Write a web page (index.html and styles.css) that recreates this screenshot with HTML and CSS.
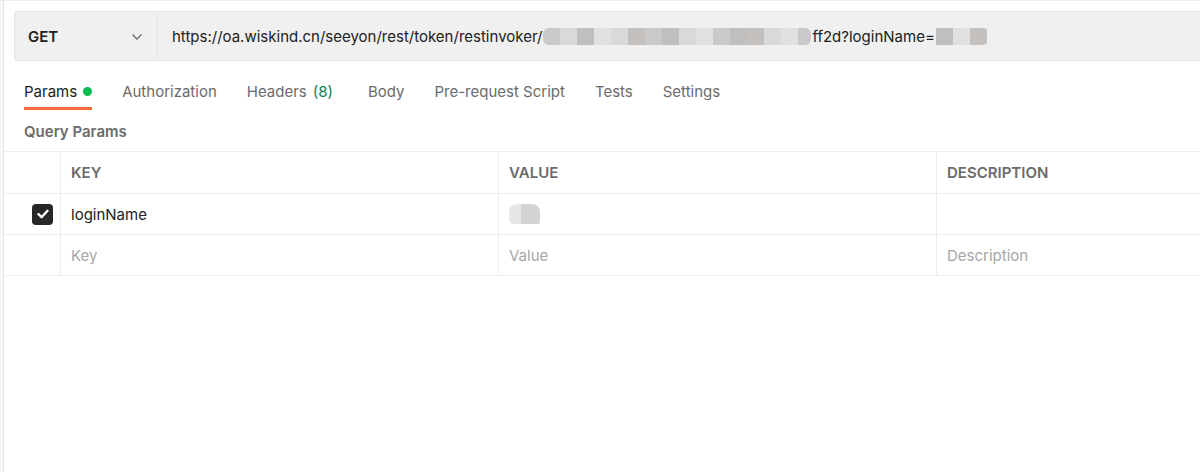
FILE: index.html
```html
<!DOCTYPE html>
<html>
<head>
<meta charset="utf-8">
<link rel="stylesheet" href="styles.css">
</head>
<body>
<div class="app">
  <div class="side"></div>
  <div class="main">
    <div class="urlbar">
      <div class="method">
        <span class="method-name">GET</span>
        <svg class="chev" width="12" height="8" viewBox="0 0 12 8"><path d="M1.5 1.5 L6 6 L10.5 1.5" fill="none" stroke="#6b6b6b" stroke-width="1.4"/></svg>
      </div>
      <div class="url">
        <span>https://oa.wiskind.cn/seeyon/rest/token/restinvoker/</span><span class="mosaic m1"><i class="c1"></i><i class="c2"></i><i class="c3"></i><i class="c4"></i><i class="c2"></i><i class="c5"></i><i class="c1"></i><i class="c3"></i><i class="c2"></i><i class="c4"></i><i class="c1"></i><i class="c3"></i><i class="c5"></i><i class="c2"></i><i class="c4"></i><i class="c1"></i></span><span>ff2d?loginName=</span><span class="mosaic m2"><i class="c3"></i><i class="c4"></i><i class="c5"></i></span>
      </div>
    </div>
    <div class="tabs">
      <div class="tab active">Params <span class="dot"></span></div>
      <div class="tab">Authorization</div>
      <div class="tab headers">Headers <span class="count">(8)</span></div>
      <div class="tab">Body</div>
      <div class="tab">Pre-request Script</div>
      <div class="tab">Tests</div>
      <div class="tab">Settings</div>
    </div>
    <div class="section-title">Query Params</div>
    <div class="table">
      <div class="row head">
        <div class="cell chk"></div>
        <div class="cell">KEY</div>
        <div class="cell">VALUE</div>
        <div class="cell">DESCRIPTION</div>
      </div>
      <div class="row">
        <div class="cell chk">
          <span class="checkbox"><svg width="12" height="10" viewBox="0 0 12 10"><path d="M1.5 5.2 L4.6 8.2 L10.5 1.8" fill="none" stroke="#fff" stroke-width="2.4" stroke-linecap="round" stroke-linejoin="round"/></svg></span>
        </div>
        <div class="cell text">loginName</div>
        <div class="cell"><span class="blurval"><i class="b1"></i><i class="b2"></i></span></div>
        <div class="cell"></div>
      </div>
      <div class="row">
        <div class="cell chk"></div>
        <div class="cell ph">Key</div>
        <div class="cell ph">Value</div>
        <div class="cell ph">Description</div>
      </div>
    </div>
  </div>
</div>
</body>
</html>
```

FILE: styles.css
```css
html, body {
  margin: 0;
  padding: 0;
  background: #fff;
  height: 100%;
}
body {
  font-family: Inter, "Noto Sans", sans-serif;
  font-size: 15px;
  color: #212121;
}
.app {
  display: flex;
  height: 472px;
  border-top: 1px solid #ededed;
  box-sizing: border-box;
  overflow: hidden;
}
.side {
  width: 3px;
  background: #f7f7f7;
  border-right: 1px solid #e6e6e6;
  flex: none;
}
.main {
  flex: 1;
  min-width: 0;
}
.urlbar {
  margin: 10px 0 0 10px;
  height: 48px;
  display: flex;
  background: #f0f0f0;
  border: 1px solid #e3e3e3;
  border-right: none;
  border-radius: 4px 0 0 4px;
}
.method {
  width: 143px;
  flex: none;
  display: flex;
  align-items: center;
  justify-content: space-between;
  padding: 0 14px 0 13px;
  box-sizing: border-box;
  border-right: 1px solid #e3e3e3;
}
.method-name {
  font-weight: 600;
  font-size: 15px;
  color: #212121;
}
.chev { margin-top: 1px; }
.url {
  display: flex;
  align-items: center;
  padding-left: 14px;
  font-size: 15px;
  color: #212121;
  white-space: nowrap;
}
.mosaic {
  display: inline-flex;
  height: 17px;
  margin: 0 1px;
}
.mosaic i {
  display: block;
  height: 17px;
  width: 17px;
  flex: none;
}
.m1 { width: 268px; overflow: hidden; border-radius: 6px; }
.m2 { width: 54px; overflow: hidden; border-radius: 0 8px 8px 0; }
.c1 { background: #c9c9c9; }
.c2 { background: #d9d9d9; }
.c3 { background: #bfbfbf; }
.c4 { background: #e0e0e0; }
.c5 { background: #c4c0bd; }
.tabs {
  display: flex;
  gap: 30px;
  margin: 11px 0 0 20px;
  height: 38px;
}
.tab {
  padding-top: 10px;
  color: #6b6b6b;
  box-sizing: border-box;
  height: 38px;
  display: flex;
  align-items: flex-start;
  gap: 6px;
  white-space: nowrap;
}
.tab.active {
  color: #212121;
  border-bottom: 3px solid #f26b3a;
}
.tab.headers { padding-right: 5px; }
.dot {
  width: 9px;
  height: 9px;
  border-radius: 50%;
  background: #0cbb52;
  margin-top: 5px;
}
.count { color: #0a7d52; }
.section-title {
  margin: 11px 0 0 20px;
  font-weight: 600;
  color: #6b6b6b;
  height: 21px;
  line-height: 21px;
}
.table {
  margin-top: 9px;
  border-top: 1px solid #ededed;
}
.row {
  display: grid;
  grid-template-columns: 56px 438px 438px 1fr;
  height: 40px;
  border-bottom: 1px solid #ededed;
}
.row.head { height: 41px; }
.cell {
  border-left: 1px solid #ededed;
  padding-left: 10px;
  display: flex;
  align-items: center;
  white-space: nowrap;
}
.cell.chk {
  border-left: none;
  justify-content: flex-end;
  padding-right: 7px;
  padding-left: 0;
}
.head .cell {
  font-weight: 600;
  color: #6b6b6b;
}
.cell.text { color: #212121; }
.cell.ph { color: #a6a6a6; }
.checkbox {
  width: 21px;
  height: 21px;
  border-radius: 4px;
  background: #282828;
  display: flex;
  align-items: center;
  justify-content: center;
}
.blurval {
  display: inline-flex;
  height: 20px;
  border-radius: 8px 8px 2px 5px;
  overflow: hidden;
}
.blurval i { display: block; height: 20px; }
.b1 { background: #e6e6e6; width: 12px; }
.b2 { background: #d3d3d3; width: 19px; }
```
